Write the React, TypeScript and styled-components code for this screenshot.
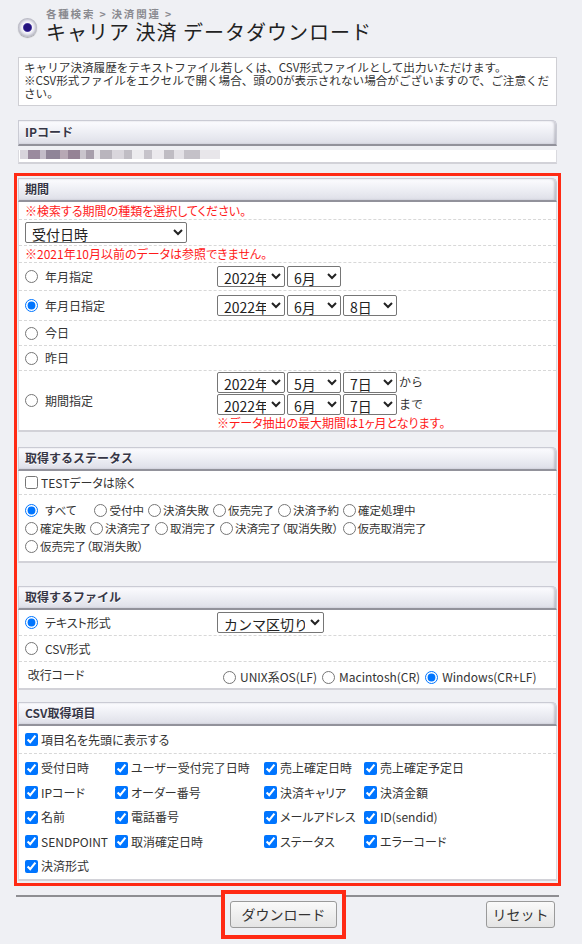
import React from "react";
import styled, { createGlobalStyle } from "styled-components";

const GlobalStyle = createGlobalStyle`
  *, *::before, *::after {
    box-sizing: border-box;
  }
  body {
    margin: 0;
    background: #eff0f4;
    font-family: "Noto Sans CJK JP", "Noto Sans", sans-serif;
    line-height: 1.2;
    color: #333;
  }
  input, select, button {
    font-family: "Noto Sans CJK JP", "Noto Sans", sans-serif;
  }
`;

const Page = styled.div`
  width: 557px;
  padding: 8px 0 5px 18px;
`;

const TitleBar = styled.div`
  display: flex;
  align-items: flex-start;
  gap: 9px;
  height: 49px;
`;

const TitleIcon = styled.span`
  flex: none;
  width: 19px;
  height: 19px;
  margin-top: 10px;
  border-radius: 50%;
  background: radial-gradient(
    circle at 50% 50%,
    #24137e 0 3.5px,
    #4a3aa0 4px,
    #f6f6fa 5px,
    #e8e8f0 6.5px,
    #b2b2be 9.5px
  );
  box-shadow: 0 1px 1px rgba(0, 0, 0, 0.3);
`;

const TitleText = styled.div`
  display: flex;
  flex-direction: column;
`;

const Crumb = styled.span`
  font-size: 10.5px;
  font-weight: bold;
  line-height: 12px;
  letter-spacing: 1.8px;
  color: #8a8a90;
`;

const Title = styled.h1`
  margin: 0;
  font-size: 20px;
  font-weight: normal;
  line-height: 24px;
  color: #222;
  letter-spacing: 1px;
`;

const Notice = styled.div`
  background: #fff;
  border: 1px solid #cfcfd4;
  padding: 3px 5px 5px;
  font-size: 11.6px;
  line-height: 13px;
  color: #333;
`;

const Highlight = styled.div`
  margin: 0 -4px;
  border: 3px solid #ff2a14;
  padding: 2px 1px;
`;

const Section = styled.section<{ $gap?: number }>`
  margin-top: ${(p) => p.$gap ?? 15}px;
  &:first-child {
    margin-top: 0;
  }
`;

const SectionHead = styled.div<{ $h?: number }>`
  height: ${(p) => p.$h ?? 24}px;
  display: flex;
  align-items: center;
  padding-left: 6px;
  background: linear-gradient(#fcfcff, #ecedf3 55%, #dedfe8);
  border: 1px solid #cacbd4;
  border-bottom: 2px solid #92929b;
  border-radius: 0 5px 0 0;
  box-shadow: inset -2px 0 2px rgba(120, 120, 135, 0.35);
  font-size: 12px;
  font-weight: bold;
  color: #363646;
  text-shadow: 0 1px 0 #fff;
`;

const SectionBody = styled.div`
  background: #fff;
  border: 1px solid #dadadf;
  border-top: none;
  border-bottom: 2px solid #d2d2d8;
`;

const Row = styled.div<{ $h?: number }>`
  display: grid;
  grid-template-columns: 192px 1fr;
  align-items: center;
  min-height: ${(p) => p.$h ?? 26}px;
  padding: 0 6px;
  border-bottom: 1px dashed #d8d8d8;
  font-size: 12px;
  line-height: 14px;
  &:last-child {
    border-bottom: none;
  }
`;

const FullRow = styled.div<{ $h?: number }>`
  display: flex;
  flex-direction: column;
  justify-content: center;
  min-height: ${(p) => p.$h ?? 26}px;
  padding: 0 6px;
  border-bottom: 1px dashed #d8d8d8;
  font-size: 12px;
  line-height: 14px;
  &:last-child {
    border-bottom: none;
  }
`;

const Warn = styled.span`
  color: #ff1a1a;
  font-size: 12px;
  line-height: 14px;
  font-feature-settings: "palt";
`;

const Choice = styled.label<{ $gap?: number; $size?: number }>`
  display: inline-flex;
  align-items: center;
  gap: ${(p) => p.$gap ?? 5}px;
  white-space: nowrap;
  font-size: ${(p) => p.$size ?? 12}px;
  line-height: 14px;
  color: #333;
  font-feature-settings: "palt";
  input {
    margin: 0;
    width: 13px;
    height: 13px;
    flex: none;
  }
`;

const Select = styled.select<{ $w: number }>`
  width: ${(p) => p.$w}px;
  height: 21px;
  font-size: 14px;
  padding: 0 2px;
  color: #222;
  border: 1px solid #767676;
  border-radius: 2px;
  background: #fff;
  margin-right: 2px;
`;

const Controls = styled.div`
  display: flex;
  flex-direction: column;
  gap: 1px;
`;

const SelectLine = styled.div`
  display: flex;
  align-items: center;
  font-size: 12px;
  color: #333;
`;

const StatusWrap = styled.div`
  display: flex;
  flex-direction: column;
  gap: 4px;
  padding: 8px 0 8px;
`;

const StatusLine = styled.div`
  display: flex;
  gap: 4px;
`;

const Eol = styled.div`
  display: flex;
  align-items: center;
  gap: 5px;
  padding: 4px 0 0 6px;
`;

const ItemGrid = styled.div`
  display: grid;
  grid-template-columns: 90px 149px 100px 1fr;
  grid-auto-rows: 24.5px;
  align-items: center;
  padding: 2px 0 0 0;
`;

const BlurValue = styled.div`
  width: 200px;
  height: 9px;
  margin: 4px 0 3px;
  background: linear-gradient(
    90deg,
    #d8d4dc 0 4%,
    #9a8a9e 4% 10%,
    #c2bcc8 10% 13%,
    #8f8598 13% 20%,
    #b7a8b4 20% 24%,
    #958395 24% 30%,
    #c9c4cc 30% 33%,
    #a79eab 33% 37%,
    #e6e4e8 37% 40%,
    #b9b5bd 40% 46%,
    #d9d6dc 46% 52%,
    #c0bdc4 52% 56%,
    #ecebee 56% 62%,
    #c6c3ca 62% 66%,
    #ebe9ed 66% 72%,
    #bfbcc3 72% 77%,
    #e3e1e6 77% 82%,
    #c4c1c8 82% 90%,
    #e8e6ea 90% 100%
  );
`;

const IpBody = styled(SectionBody)`
  padding: 0 0 0 1px;
`;

const Footer = styled.div`
  margin: 9px -2px 0;
  border-top: 2px solid #8e8e92;
  display: flex;
  align-items: flex-start;
  justify-content: space-between;
  padding: 0 4px 0 205px;
`;

const Callout = styled.div`
  margin-top: -7px;
  border: 4px solid #ff2a14;
  padding: 7px 5px;
  background: #eff0f4;
`;

const Button = styled.button<{ $w: number }>`
  display: block;
  width: ${(p) => p.$w}px;
  height: 27px;
  font-size: 14px;
  line-height: 16px;
  color: #333;
  border: 1px solid #9a9a9a;
  border-radius: 3px;
  background: linear-gradient(#fafafa, #e4e4e4);
  padding: 0;
`;

const ResetButton = styled(Button)`
  margin-top: 4px;
`;

const StatusLabel = styled.span<{ $first?: boolean }>`
  margin-right: ${(p) => (p.$first ? 14 : 0)}px;
`;

const years = ["2022年"];

const Ymd = ({ m, d, suffix }: { m: string; d?: string; suffix?: string }) => (
  <SelectLine>
    <Select $w={68} defaultValue={years[0]}>
      {years.map((y) => (
        <option key={y}>{y}</option>
      ))}
    </Select>
    <Select $w={54}>
      <option>{m}</option>
    </Select>
    {d && (
      <Select $w={54}>
        <option>{d}</option>
      </Select>
    )}
    {suffix}
  </SelectLine>
);

const statusLines = [
  ["すべて", "受付中", "決済失敗", "仮売完了", "決済予約", "確定処理中"],
  ["確定失敗", "決済完了", "取消完了", "決済完了（取消失敗）", "仮売取消完了"],
  ["仮売完了（取消失敗）"],
];

const csvItems = [
  "受付日時",
  "ユーザー受付完了日時",
  "売上確定日時",
  "売上確定予定日",
  "IPコード",
  "オーダー番号",
  "決済キャリア",
  "決済金額",
  "名前",
  "電話番号",
  "メールアドレス",
  "ID(sendid)",
  "SENDPOINT",
  "取消確定日時",
  "ステータス",
  "エラーコード",
  "決済形式",
];

export default function App() {
  return (
    <>
      <GlobalStyle />
      <Page>
        <TitleBar>
          <TitleIcon />
          <TitleText>
            <Crumb>各種検索 &gt; 決済関連 &gt;</Crumb>
            <Title>キャリア 決済 データダウンロード</Title>
          </TitleText>
        </TitleBar>

        <Notice>
          キャリア決済履歴をテキストファイル若しくは、CSV形式ファイルとして出力いただけます。
          <br />
          ※CSV形式ファイルをエクセルで開く場合、頭の0が表示されない場合がございますので、ご注意ください。
        </Notice>

        <Section $gap={14}>
          <SectionHead $h={26}>IPコード</SectionHead>
          <IpBody>
            <BlurValue />
          </IpBody>
        </Section>

        <Section $gap={9}>
          <Highlight>
            <Section>
              <SectionHead>期間</SectionHead>
              <SectionBody>
                <FullRow $h={18}>
                  <Warn>※検索する期間の種類を選択してください。</Warn>
                </FullRow>
                <FullRow $h={26}>
                  <Select $w={162}>
                    <option>受付日時</option>
                  </Select>
                </FullRow>
                <FullRow $h={17}>
                  <Warn>※2021年10月以前のデータは参照できません。</Warn>
                </FullRow>
                <Row $h={28}>
                  <Choice $gap={7}>
                    <input type="radio" name="period" />
                    年月指定
                  </Choice>
                  <Controls>
                    <Ymd m="6月" />
                  </Controls>
                </Row>
                <Row $h={30}>
                  <Choice $gap={7}>
                    <input type="radio" name="period" defaultChecked />
                    年月日指定
                  </Choice>
                  <Controls>
                    <Ymd m="6月" d="8日" />
                  </Controls>
                </Row>
                <Row $h={25}>
                  <Choice $gap={7}>
                    <input type="radio" name="period" />
                    今日
                  </Choice>
                </Row>
                <Row $h={25}>
                  <Choice $gap={7}>
                    <input type="radio" name="period" />
                    昨日
                  </Choice>
                </Row>
                <Row $h={59}>
                  <Choice $gap={7}>
                    <input type="radio" name="period" />
                    期間指定
                  </Choice>
                  <Controls>
                    <Ymd m="5月" d="7日" suffix="から" />
                    <Ymd m="6月" d="7日" suffix="まで" />
                    <Warn>※データ抽出の最大期間は1ヶ月となります。</Warn>
                  </Controls>
                </Row>
              </SectionBody>
            </Section>

            <Section $gap={15}>
              <SectionHead>取得するステータス</SectionHead>
              <SectionBody>
                <FullRow $h={24}>
                  <Choice $gap={3}>
                    <input type="checkbox" />
                    TESTデータは除く
                  </Choice>
                </FullRow>
                <FullRow>
                  <StatusWrap>
                    {statusLines.map((line, i) => (
                      <StatusLine key={i}>
                        {line.map((s) => (
                          <Choice key={s} $gap={s === "すべて" ? 7 : 2} $size={11.5}>
                            <input
                              type="radio"
                              name="status"
                              defaultChecked={s === "すべて"}
                            />
                            <StatusLabel $first={s === "すべて"}>{s}</StatusLabel>
                          </Choice>
                        ))}
                      </StatusLine>
                    ))}
                  </StatusWrap>
                </FullRow>
              </SectionBody>
            </Section>

            <Section $gap={23}>
              <SectionHead>取得するファイル</SectionHead>
              <SectionBody>
                <Row $h={26}>
                  <Choice $gap={7}>
                    <input type="radio" name="file" defaultChecked />
                    テキスト形式
                  </Choice>
                  <Controls>
                    <SelectLine>
                      <Select $w={107}>
                        <option>カンマ区切り</option>
                      </Select>
                    </SelectLine>
                  </Controls>
                </Row>
                <Row $h={26}>
                  <Choice $gap={7}>
                    <input type="radio" name="file" />
                    CSV形式
                  </Choice>
                </Row>
                <Row $h={26}>
                  <Choice as="span">&nbsp;改行コード</Choice>
                  <Eol>
                    <Choice $gap={4}>
                      <input type="radio" name="eol" />
                      UNIX系OS(LF)
                    </Choice>
                    <Choice $gap={4}>
                      <input type="radio" name="eol" />
                      Macintosh(CR)
                    </Choice>
                    <Choice $gap={4}>
                      <input type="radio" name="eol" defaultChecked />
                      Windows(CR+LF)
                    </Choice>
                  </Eol>
                </Row>
              </SectionBody>
            </Section>

            <Section $gap={12}>
              <SectionHead>CSV取得項目</SectionHead>
              <SectionBody>
                <FullRow $h={28}>
                  <Choice $gap={3}>
                    <input type="checkbox" defaultChecked />
                    項目名を先頭に表示する
                  </Choice>
                </FullRow>
                <FullRow>
                  <ItemGrid>
                    {csvItems.map((item) => (
                      <Choice key={item} $gap={3}>
                        <input type="checkbox" defaultChecked />
                        {item}
                      </Choice>
                    ))}
                  </ItemGrid>
                </FullRow>
              </SectionBody>
            </Section>
          </Highlight>
        </Section>

        <Footer>
          <Callout>
            <Button $w={107}>ダウンロード</Button>
          </Callout>
          <ResetButton $w={69}>リセット</ResetButton>
        </Footer>
      </Page>
    </>
  );
}
